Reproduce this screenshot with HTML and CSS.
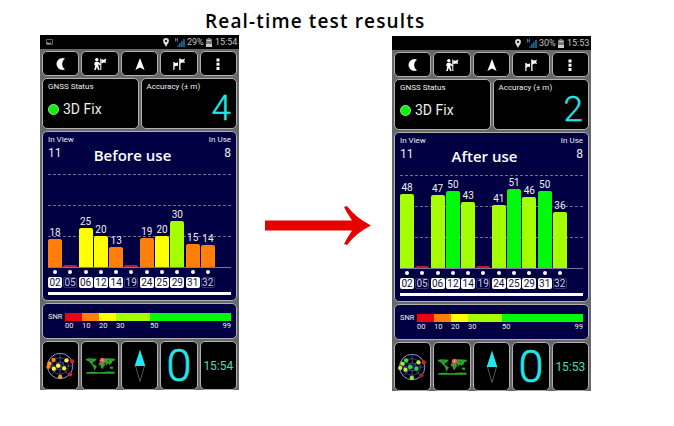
FILE: index.html
```
<!DOCTYPE html>
<html lang="en">
<head>
    <meta charset="UTF-8">
    <meta name="viewport" content="width=device-width, initial-scale=1.0">
    <title>Real-time test results</title>
    <link rel="stylesheet" href="styles.css">
</head>
<body>
    <h1>Real-time test results</h1>
    <div class="compare">
        <div class="phone" id="before"></div>
        <svg class="arrow" width="107" height="41" viewBox="0 0 107 41">
            <path d="M0 15.500H87Q82 8 79 2L82 1Q91 13 106 20.500Q91 28 82 40L79 39Q82 33 87 25.500H0Z" fill="#e60000"/>
        </svg>
        <div class="phone after" id="after"></div>
    </div>

    <script>
        const sats = ['02', '05', '06', '12', '14', '19', '24', '25', '29', '31', '32'];
        const unused = ['05', '19', '32'];
        const unit = 1.545; // px per dB

        const icons = {
            moon: '<svg width="14" height="14" viewBox="0 0 14 14"><path d="M8.500 1A6 6 0 0 0 8.500 13Q10 13 11 12.300A6.400 6.400 0 0 1 11 1.700Q10 1 8.500 1Z" fill="#fff"/></svg>',
            person: '<svg width="14" height="14" viewBox="0 0 14 14" fill="#fff"><circle cx="3.800" cy="2.800" r="1.700"/><path d="M2 5H5.500L8 7.500 7.400 8.400 5.400 7.300V9L6.700 13H5L3.900 9.800 2.800 13H1.200L2.200 8.500 1 7.500Z"/><path d="M7.300 1.500H8.300V13H7.300ZM8.500 2.200Q10.500 3.400 13.500 1.500L12.500 4.300 13 6Q10.500 5 8.500 6.600Z"/></svg>',
            nav: '<svg width="12" height="14" viewBox="0 0 12 14"><path d="M6 1L10.600 13 6 10.500 1.400 13Z" fill="#fff"/></svg>',
            flags: '<svg width="14" height="14" viewBox="0 0 14 14" fill="#fff"><path d="M1.300 5H2.500V13H1.300ZM2.500 5.500Q4 6.500 6 5.300V9Q4 8.500 2.500 9.400ZM7.200 1.500H8.500V13H7.200ZM8.500 2Q10.500 3 13 1.500L12.200 4 13 6Q10.500 5 8.500 6.500Z"/></svg>',
            more: '<svg width="6" height="14" viewBox="0 0 6 14" fill="#fff"><path d="M1.500 1.500h3v3h-3zM1.500 5.700h3v3h-3zM1.500 9.900h3v3h-3z"/></svg>',
            map: '<svg class="map" width="31" height="17" viewBox="0 0 92 52"><path fill="#27a82d" d="M1 6L12 4 34 5 31 12 25 14 21 20 26 23 35 28 31 35 27 42 24 29 17 21 10 13 2 10ZM42 17L50 15 58 19 61 24 56 29 53 37 48 34 46 26 40 23ZM42 12L46 6 62 4 90 5 89 11 82 13 80 20 74 24 69 19 65 26 60 18 50 14ZM74 30L83 29 85 36 76 36ZM2 47L20 45 45 47 70 44 90 46 88 51H3Z"/><path d="M30 10L34 12M67 12L72 10M14 9L19 10" stroke="#0a2a0d" stroke-width="2"/><path d="M52 24L46 13H58Z" fill="#d44"/><circle cx="52" cy="10" r="8" fill="#ef5350"/><circle cx="52" cy="10" r="3" fill="#f6b0a0"/></svg>',
            compass: '<svg class="compass" width="12" height="34" viewBox="0 0 12 34"><path d="M6 0.500L11.300 17H0.700Z" fill="#1fe9ee"/><path d="M1.500 17L6 32.500 10.500 17" fill="none" stroke="#62736f" stroke-width="0.800"/></svg>',
            pin: '<svg width="6" height="9" viewBox="0 0 6 9"><path d="M3 0A2.900 2.900 0 0 0 .1 3C.1 5 2 6.500 3 9 4 6.500 5.900 5 5.900 3A2.900 2.900 0 0 0 3 0ZM3 1.900A1.100 1.100 0 1 1 3 4.100 1.100 1.100 0 0 1 3 1.900Z" fill="#ddd" fill-rule="evenodd"/></svg>',
            signal: '<svg width="10" height="9" viewBox="0 0 10 9" fill="#2382bd"><path d="M0 0h1v1.200h1V0h1v3.500H2V2.200H1v1.300H0zM2.500 7h1v2h-1zM4.200 5h1.300v4H4.200zM6.200 3h1.300v6H6.200zM8.300 1h1.400v8H8.300z"/></svg>',
            battery: '<svg width="6" height="9" viewBox="0 0 6 9"><path d="M1.500 0h3v1H6v8H0V1h1.500z" fill="#777"/><path d="M0 6h6v3H0zM1 2h4v1H1z" fill="#ccc"/></svg>',
            picture: '<svg width="7" height="6" viewBox="0 0 7 6"><path d="M.5 .5h6v5h-6z" fill="none" stroke="#777" stroke-width=".8"/><path d="M1 5V3l1.500 1L5 3.500V5z" fill="#999"/></svg>'
        };

        const barColor = (snr) => {
            if (snr >= 50) return 'green';
            if (snr >= 30) return 'lime';
            if (snr >= 20) return 'yellow';
            if (snr >= 10) return 'orange';
            return 'red';
        };

        const radar = (dots) => `
            <svg class="radar" width="32" height="30" viewBox="0 0 95 90">
                <g fill="none" stroke="#8791e0" stroke-width="3">
                    <circle cx="45" cy="45" r="38"/>
                    <g stroke-width="2" stroke="#5963bd">
                        <circle cx="45" cy="45" r="25"/><circle cx="45" cy="45" r="12"/>
                        <path d="M45 7V83M7 45H83M18 18L72 72M72 18L18 72"/>
                    </g>
                </g>
                ${dots.map(([x, y, c]) => `<circle cx="${x}" cy="${y}" r="6.500" fill="${c}"/>`).join('')}
            </svg>`;

        const column = (id, snr) => `
            <div class="column">
                ${snr ? `<span>${snr}</span>` : ''}
                <div class="bar ${barColor(snr)}" style="height: ${snr ? snr * unit : 2}px"></div>
            </div>`;

        const render = (el, d) => {
            el.innerHTML = `
                <div class="status">
                    <div class="notice">${d.notice ? icons.picture : ''}</div>
                    ${icons.pin}<i></i>${icons.signal}<span class="percent">${d.battery}</span>${icons.battery}<span class="clock">${d.time}</span>
                </div>
                <div class="row tools">
                    ${['moon', 'person', 'nav', 'flags', 'more'].map(n => `<div class="tile">${icons[n]}</div>`).join('')}
                </div>
                <div class="row fix">
                    <div class="tile">
                        <div class="label">GNSS Status</div>
                        <div class="state"><b></b>3D Fix</div>
                    </div>
                    <div class="tile">
                        <div class="label">Accuracy (± m)</div>
                        <div class="accuracy">${d.accuracy}</div>
                    </div>
                </div>
                <div class="tile chart">
                    <div class="caption">${d.caption}</div>
                    <div class="counts">
                        <div><div class="label">In View</div><div class="count">11</div></div>
                        <div class="right"><div class="label">In Use</div><div class="count">8</div></div>
                    </div>
                    <div class="plot">
                        <div class="grid"><hr><hr><hr></div>
                        ${sats.map((id, i) => column(id, d.snr[i])).join('')}
                    </div>
                    <div class="ids">
                        ${sats.map(id => `<div><i></i><span class="${unused.includes(id) ? 'off' : ''}">${id}</span></div>`).join('')}
                    </div>
                    <div class="scroll"></div>
                </div>
                <div class="tile snr">
                    <div class="label">SNR</div>
                    <div class="scale">
                        <div class="red">00</div>
                        <div class="orange">10</div>
                        <div class="yellow">20</div>
                        <div class="lime">30</div>
                        <div class="green"><span>50</span><span>99</span></div>
                    </div>
                </div>
                <div class="row dock">
                    <div class="tile">${radar(d.dots)}</div>
                    <div class="tile">${icons.map}</div>
                    <div class="tile">${icons.compass}</div>
                    <div class="tile speed">0</div>
                    <div class="tile time">${d.time}</div>
                </div>`;
        };

        render(document.getElementById('before'), {
            caption: 'Before use', notice: true, battery: '29%', time: '15:54', accuracy: 4,
            snr: [18, 0, 25, 20, 13, 0, 19, 20, 30, 15, 14],
            dots: [[13, 37, '#f93'], [25, 27, '#f80'], [10, 47, '#f80'], [26, 53, '#fe3'], [39, 44, '#ff3'], [64, 28, '#fe5'],
                [57, 52, '#fe3'], [81, 31, '#d21e2e'], [75, 70, '#d21e2e'], [45, 78, '#f93']]
        });
        render(document.getElementById('after'), {
            caption: 'After use', notice: false, battery: '30%', time: '15:53', accuracy: 2,
            snr: [48, 0, 47, 50, 43, 0, 41, 51, 46, 50, 36],
            dots: [[16, 35, '#9e3'], [9, 48, '#be3'], [27, 25, '#3d4'], [25, 53, '#be3'], [39, 45, '#2d4'], [58, 50, '#3c5'],
                [64, 31, '#be4'], [80, 31, '#d21e2e'], [73, 70, '#a21e2e'], [44, 78, '#9e3']]
        });
    </script>
</body>
</html>
```
FILE: styles.css
```
* {
    box-sizing: border-box;
}
body {
    margin: 0;
    height: 426px;
    overflow: hidden;
    background: #fff;
    font-family: Roboto, sans-serif;
    color: #eee;
}
h1 {
    margin: 0;
    height: 35px;
    padding: 8px 0 0 205px;
    font: 600 19px/27px "Open Sans", sans-serif;
    letter-spacing: 1.15px;
    color: #000;
    white-space: nowrap;
}
.compare {
    display: flex;
    align-items: flex-start;
    padding-left: 40px;
}
.arrow {
    margin: 170px 20px 0 26px;
}
.phone {
    width: 199px;
    height: 355px;
    flex: none;
    background: #68686b;
    display: flex;
    flex-direction: column;
    gap: 2px;
}
.after {
    margin-top: 1px;
}
.status {
    height: 14px;
    background: #000;
    display: flex;
    align-items: center;
    padding: 0 2px 0 6px;
    font-size: 9px;
    color: #c4c4c4;
}
.notice {
    flex: 1;
    display: flex;
}
.status i {
    width: 6px;
}
.percent {
    width: 18px;
    margin: 0 1px 0 2px;
}
.clock {
    width: 22px;
    margin-left: 3px;
}
.row {
    display: flex;
    gap: 2px;
    padding: 0 2px;
}
.tile {
    flex: 1;
    min-width: 0;
    background: #000;
    border: 1px solid #b0b0b0;
    border-radius: 5px;
}
.tools .tile, .dock .tile {
    display: flex;
    align-items: center;
    justify-content: center;
}
.tools {
    height: 25px;
}
.fix {
    height: 51px;
}
.fix .tile {
    padding: 3px 5px;
}
.label {
    font-size: 8px;
    line-height: 10px;
    white-space: nowrap;
}
.state {
    display: flex;
    align-items: center;
    gap: 4px;
    margin-top: 8px;
    font-size: 14px;
    line-height: 18px;
}
.state b {
    width: 11px;
    height: 11px;
    border-radius: 50%;
    background: #10ee10;
    border: 1px solid #8cf08c;
}
.accuracy {
    font-size: 35px;
    line-height: 34px;
    text-align: right;
    font-weight: 300;
    color: #20e8e8;
    -webkit-text-stroke: 0.3px #20e8e8;
}
.chart {
    position: relative;
    flex: none;
    height: 170px;
    margin: 0 2px;
    padding: 3px 5px;
    background: #000042;
}
.caption {
    position: absolute;
    top: 12px;
    left: 0;
    right: 14px;
    text-align: center;
    font: 600 15px/22px "Open Sans", sans-serif;
    color: #fff;
}
.counts {
    display: flex;
    justify-content: space-between;
}
.right {
    text-align: right;
}
.count {
    height: 15px;
    font-size: 12px;
    line-height: 17px;
}
.plot {
    position: relative;
    height: 108px;
    display: flex;
    align-items: flex-end;
    border-bottom: 1px solid #77779a;
}
.grid {
    position: absolute;
    left: 0;
    right: 0;
    bottom: 0;
}
.grid hr {
    margin: 0 0 29.9px;
    border: 0;
    border-top: 1px dashed #6d6d98;
}
.column {
    position: relative;
    width: 14px;
    margin-right: 1.3px;
    text-align: center;
    font-size: 10px;
    line-height: 12px;
}
.bar {
    border-radius: 2px 2px 0 0;
}
.red {
    background: #f00014;
}
.orange {
    background: #ff7f0a;
}
.yellow {
    background: #ff0;
}
.lime {
    background: #a4ff00;
}
.green {
    background: #00fa0a;
}
.column .red {
    background: #c01838;
}
.ids {
    display: flex;
    padding-top: 2px;
}
.ids div {
    width: 14px;
    margin-right: 1.3px;
    display: flex;
    flex-direction: column;
    align-items: center;
    gap: 3px;
}
.ids i {
    width: 4px;
    height: 4px;
    border-radius: 50%;
    background: #fff;
}
.ids span {
    width: 14px;
    height: 11px;
    border-radius: 2px;
    background: #fff;
    color: #111140;
    font-size: 10px;
    line-height: 11px;
    text-align: center;
}
.ids .off {
    background: none;
    border: 1px solid #34346a;
    color: #ccd;
    line-height: 9px;
    text-indent: -0.500px;
}
.scroll {
    height: 3px;
    margin-top: 4px;
    background: #fff;
}
.snr {
    flex: none;
    display: flex;
    height: 36px;
    margin: 0 2px;
    padding: 8px 5px 0;
    background: #000042;
}
.snr .label {
    width: 17px;
    font-size: 7.500px;
}
.scale {
    flex: 1;
    display: grid;
    grid-template-columns: 17px 17px 17px 34px 1fr;
    height: 7px;
    margin-top: 1px;
    font-size: 7.500px;
    line-height: 9px;
}
.scale div {
    height: 7px;
    padding-top: 8px;
}
.green {
    display: flex;
    justify-content: space-between;
}
.dock {
    height: 49px;
}
.radar {
    flex: none;
}
.dock .speed {
    font-size: 45px;
    line-height: 46px;
    font-weight: 300;
    color: #20e8e8;
    -webkit-text-stroke: 0.6px #20e8e8;
}
.dock .time {
    font-size: 12px;
    color: #55d6bd;
}
```
